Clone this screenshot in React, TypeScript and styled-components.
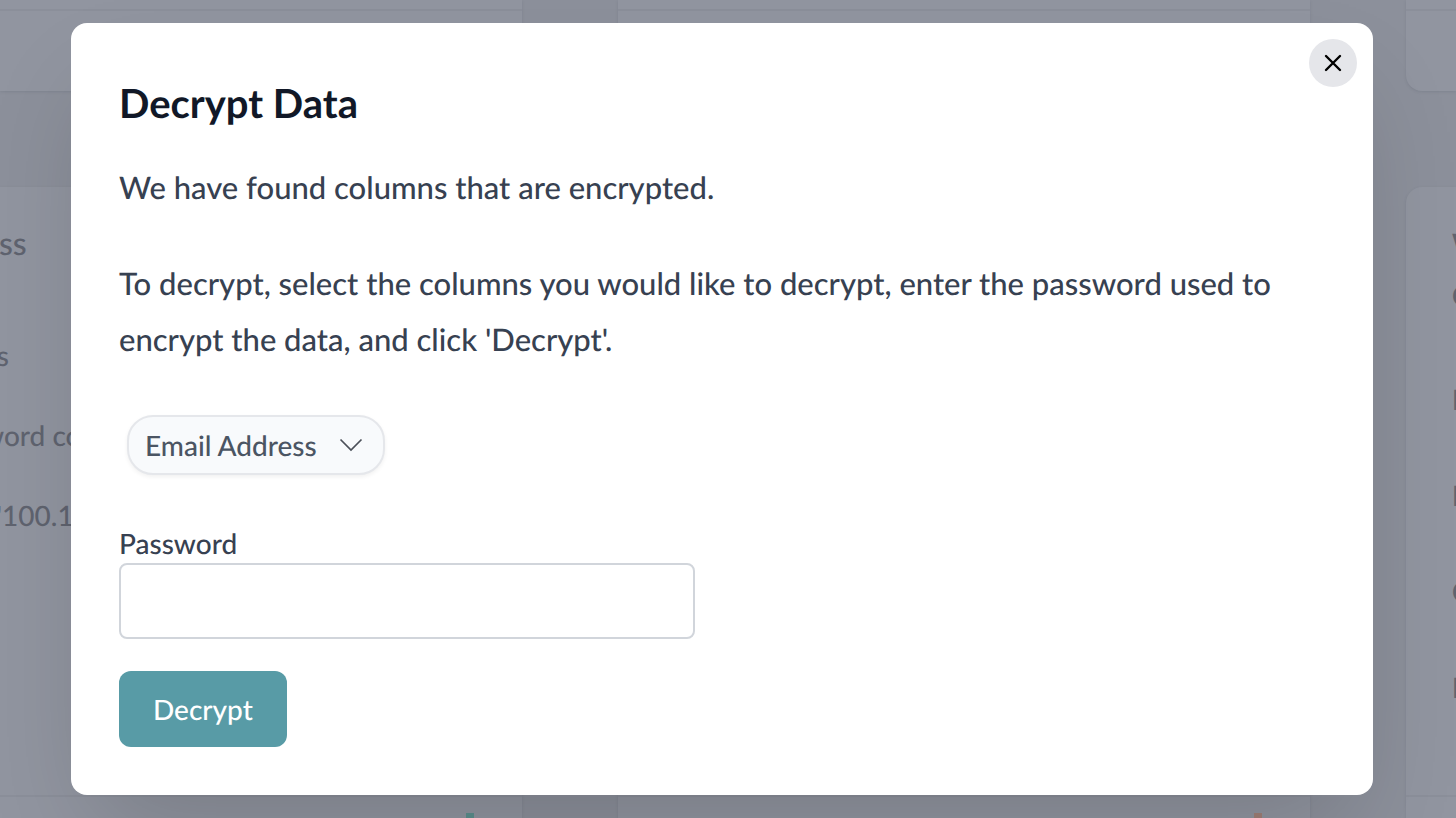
import React from 'react';
import styled, { createGlobalStyle } from 'styled-components';

const GlobalStyle = createGlobalStyle`
  *, *::before, *::after { box-sizing: border-box; }
  body {
    margin: 0;
    background: #8c909b;
    color: #374151;
    font-family: Lato, "Liberation Sans", sans-serif;
    font-weight: 500;
    text-rendering: geometricPrecision;
  }
  h1, p { margin: 0; }
  button, input, select { text-rendering: inherit; }
`;

const Page = styled.div`
  display: grid;
  grid-template-columns: minmax(0, 1fr);
  min-height: 100vh;
  overflow: hidden;
`;

const Backdrop = styled.div`
  grid-area: 1 / 1;
  display: grid;
  grid-template-columns: 522fr 692fr 50fr;
  grid-template-rows: 91px 1fr;
  gap: 96px;
  height: 100vh;
  overflow: hidden;
  color: #5f636f;
`;

const Card = styled.section<{ $edge?: 'left' | 'right' }>`
  display: flex;
  flex-direction: column;
  min-width: 0;
  overflow: hidden;
  background: #9195a0;
  box-shadow: 0 1px 3px rgba(60, 65, 80, 0.15);
  border-radius: ${({ $edge }) =>
    $edge === 'left' ? '0 16px 16px 0' : $edge === 'right' ? '16px 0 0 16px' : '16px'};
`;

const TopCard = styled(Card)`
  border-top-left-radius: 0;
  border-top-right-radius: 0;
`;

const Strip = styled.div`
  height: 11px;
  border-bottom: 2px solid #8b8f9a;
`;

const BottomCard = styled(Card)`
  border-bottom-left-radius: 0;
  border-bottom-right-radius: 0;
`;

const CardBody = styled.div`
  flex: 1;
  min-height: 0;
  padding-top: 36px;
`;

const CardFooter = styled.div`
  display: flex;
  justify-content: flex-end;
  height: 23px;
  padding: 16px 48px 0;
  border-top: 2px solid #8b8f9a;
`;

const Mark = styled.span<{ $color: string }>`
  width: 8px;
  background: ${({ $color }) => $color};
`;

const Excerpt = styled.div`
  display: flex;
  flex-direction: column;
  gap: 40px;
  margin-left: -18px;
  font-size: 28px;
  line-height: 40px;
  white-space: nowrap;
`;

const ExcerptTitle = styled.p`
  margin-bottom: 32px;
  font-size: 32px;
`;

const Terms = styled.div`
  display: flex;
  flex-direction: column;
  gap: 56px;
  padding-left: 46px;
  font-size: 28px;
  font-weight: 700;
  line-height: 40px;
`;

const TermsHeading = styled.div`
  display: flex;
  flex-direction: column;
  gap: 12px;
  margin-bottom: 8px;
`;

const DialogLayer = styled.div`
  grid-area: 1 / 1;
  display: flex;
  align-items: center;
  min-height: 100vh;
  padding: 16px 83px 16px 71px;
`;

const Dialog = styled.div`
  position: relative;
  flex: 1;
  min-width: 0;
  padding: 48px;
  background: #ffffff;
  border-radius: 16px;
  box-shadow: 0 50px 100px -24px rgba(0, 0, 0, 0.18);
`;

const CloseButton = styled.button`
  position: absolute;
  top: 16px;
  right: 16px;
  display: grid;
  place-items: center;
  width: 48px;
  height: 48px;
  padding: 0;
  border: 0;
  border-radius: 50%;
  background: #e5e6ea;
  color: #000000;
  cursor: pointer;
`;

const Title = styled.h1`
  color: #111827;
  font-size: 40px;
  font-weight: 700;
  line-height: 64px;
`;

const Message = styled.div`
  display: flex;
  flex-direction: column;
  gap: 40px;
  margin-top: 24px;
  font-size: 31px;
  line-height: 56px;
`;

const Form = styled.form`
  display: flex;
  flex-direction: column;
  align-items: flex-start;
`;

const SelectWrap = styled.div`
  display: grid;
  align-items: center;
  margin: 48px 8px;
`;

const ColumnSelect = styled.select`
  grid-area: 1 / 1;
  appearance: none;
  height: 60px;
  padding: 0 66px 0 16px;
  border: 2px solid #e5e7eb;
  border-radius: 26px;
  background: #f8fafc;
  box-shadow: 0 2px 4px rgba(0, 0, 0, 0.06);
  color: #4b5563;
  font-family: inherit;
  font-size: 28px;
  font-weight: 500;
`;

const Chevron = styled.svg`
  grid-area: 1 / 1;
  justify-self: end;
  margin-right: 22px;
  pointer-events: none;
`;

const Label = styled.label`
  font-size: 28px;
  line-height: 40px;
`;

const PasswordInput = styled.input`
  width: 100%;
  max-width: 576px;
  height: 76px;
  padding: 0 24px;
  border: 2px solid #d1d5db;
  border-radius: 8px;
  background: #ffffff;
  color: inherit;
  font-family: inherit;
  font-size: 28px;
`;

const SubmitButton = styled.button`
  height: 76px;
  margin-top: 32px;
  padding: 0 34px;
  border: 0;
  border-radius: 12px;
  background: #589ba6;
  color: #ffffff;
  font-family: inherit;
  font-size: 28px;
  font-weight: 500;
  cursor: pointer;
`;

export default function App() {
  return (
    <Page>
      <GlobalStyle />
      <Backdrop aria-hidden="true">
        <TopCard $edge="left"><Strip /></TopCard>
        <TopCard><Strip /></TopCard>
        <TopCard $edge="right"><Strip /></TopCard>
        <BottomCard $edge="left">
          <CardBody>
            <Excerpt>
              <ExcerptTitle>ess</ExcerptTitle>
              <p>es</p>
              <p>word columns</p>
              <p>e'100.1</p>
            </Excerpt>
          </CardBody>
          <CardFooter><Mark $color="#5c8f8e" /></CardFooter>
        </BottomCard>
        <BottomCard>
          <CardBody />
          <CardFooter><Mark $color="#a08078" /></CardFooter>
        </BottomCard>
        <BottomCard $edge="right">
          <CardBody>
            <Terms>
              <TermsHeading>
                <p>W</p>
                <p>C</p>
              </TermsHeading>
              <p>H</p>
              <p>H</p>
              <p>C</p>
              <p>H</p>
            </Terms>
          </CardBody>
          <CardFooter />
        </BottomCard>
      </Backdrop>

      <DialogLayer>
        <Dialog role="dialog" aria-modal="true" aria-labelledby="dialog-title">
          <CloseButton type="button" aria-label="Close">
            <svg width="18" height="18" viewBox="0 0 18 18" fill="none" stroke="currentColor" strokeWidth="2.4" strokeLinecap="round">
              <path d="M2 2L16 16M16 2L2 16" />
            </svg>
          </CloseButton>
          <Title id="dialog-title">Decrypt Data</Title>
          <Message>
            <p>We have found columns that are encrypted.</p>
            <p>
              To decrypt, select the columns you would like to decrypt, enter the password used to
              encrypt the data, and click 'Decrypt'.
            </p>
          </Message>
          <Form onSubmit={(event) => event.preventDefault()}>
            <SelectWrap>
              <ColumnSelect aria-label="Columns to decrypt">
                <option>Email Address</option>
              </ColumnSelect>
              <Chevron width="24" height="14" viewBox="0 0 24 14" fill="none" stroke="#4b5059" strokeWidth="1.7">
                <path d="M1.5 1.5L12 12L22.5 1.5" />
              </Chevron>
            </SelectWrap>
            <Label htmlFor="password">Password</Label>
            <PasswordInput id="password" type="password" />
            <SubmitButton type="submit">Decrypt</SubmitButton>
          </Form>
        </Dialog>
      </DialogLayer>
    </Page>
  );
}
